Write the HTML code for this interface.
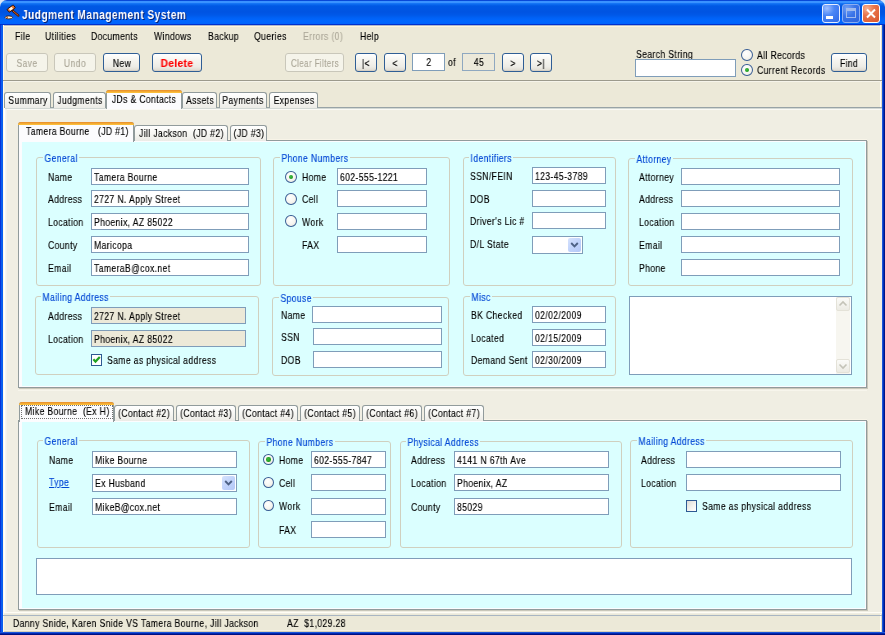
<!DOCTYPE html><html><head><meta charset="utf-8"><style>
html,body{margin:0;padding:0;width:885px;height:635px;overflow:hidden;background:#ECE9D8;}
html,body{background:#DDE6F5 !important;}
body{position:relative;font-family:"Liberation Sans",sans-serif;}
div{position:absolute;}
.t{position:absolute;white-space:pre;line-height:1;transform-origin:0 0;will-change:transform;-webkit-text-stroke:0.15px currentColor;letter-spacing:0.45px;}
</style></head><body>
<div style="left:0px;top:20px;width:885px;height:615px;background:#ECE9D8"></div>
<div style="left:0px;top:0px;width:885px;height:25px;border-radius:7px 7px 0 0;background:linear-gradient(#0848D8 0px,#0848D8 1px,#3A92FF 1px,#3A92FF 3px,#1A7AF8 3px,#0A68EE 4.5px,#0058E4 6px,#0054E2 12px,#0058E8 15px,#0062F6 18px,#0066FF 21px,#0064FC 24px,#0030D0 24px,#0030C8 25px)"></div>
<div style="left:0px;top:25px;width:1px;height:610px;background:#0832D8"></div>
<div style="left:1px;top:25px;width:2px;height:610px;background:#0A5EEE"></div>
<div style="left:882px;top:25px;width:1px;height:610px;background:#1A55D8"></div>
<div style="left:883px;top:25px;width:1px;height:610px;background:#0030B8"></div>
<div style="left:884px;top:25px;width:1px;height:610px;background:#001488"></div>
<div style="left:3px;top:630px;width:879px;height:1px;background:#F5F2E2"></div>
<div style="left:3px;top:631px;width:879px;height:1px;background:#D6D0BA"></div>
<div style="left:0px;top:632px;width:885px;height:1px;background:#1A55DA"></div>
<div style="left:0px;top:633px;width:885px;height:1px;background:#0028B0"></div>
<div style="left:0px;top:634px;width:885px;height:1px;background:#001080"></div>
<div style="left:3px;top:25px;width:879px;height:1px;background:#AEB8CC"></div>
<div style="left:3px;top:26px;width:879px;height:1px;background:#FFF5DC"></div>
<div style="left:3px;top:25px;width:1px;height:607px;background:#FFF9E8"></div>
<div style="left:880px;top:25px;width:1px;height:607px;background:#FFFFFF"></div>
<div style="left:881px;top:25px;width:1px;height:607px;background:#E6DEC6"></div>
<svg style="position:absolute;left:2px;top:2px" width="20" height="20" viewBox="0 0 20 20"><line x1="10.8" y1="8.8" x2="16.4" y2="13.6" stroke="#3A1606" stroke-width="2.2" stroke-linecap="round"/><line x1="10.8" y1="8.8" x2="16.4" y2="13.6" stroke="#E0602A" stroke-width="1.0"/><g transform="rotate(-35 9.2 6.6)"><rect x="5.3" y="4.7" width="7.8" height="3.8" rx="1" fill="#E8702E" stroke="#2A1004" stroke-width="0.9"/><rect x="7.2" y="5.3" width="3.4" height="2.6" fill="#FFF4E0"/></g><ellipse cx="6.8" cy="15.4" rx="3.7" ry="1.5" fill="#FFEFD2" stroke="#2A1004" stroke-width="0.8"/><rect x="4.5" y="14.8" width="1.5" height="1.2" fill="#E0602A"/></svg>
<span class="t" style="left:23.00px;top:9.20px;font-size:13px;color:#0A1E6A;font-weight:bold;transform:scaleX(0.78);-webkit-text-stroke:0;letter-spacing:0.6px;">Judgment Management System</span>
<span class="t" style="left:22.00px;top:8.20px;font-size:13px;color:#FFFFFF;font-weight:bold;transform:scaleX(0.78);-webkit-text-stroke:0;letter-spacing:0.6px;">Judgment Management System</span>
<div style="left:822px;top:4px;width:18px;height:19px;border:1px solid #E6EEFF;border-radius:3px;box-sizing:border-box;background:radial-gradient(circle at 25% 20%,#9FC0FF 0%,#4A86F6 40%,#2F68E6 100%)"></div>
<div style="left:842px;top:4px;width:18px;height:19px;border:1px solid #8CAEF0;border-radius:3px;box-sizing:border-box;background:radial-gradient(circle at 25% 20%,#6F9FF5 0%,#3A74E8 45%,#2C62DC 100%)"></div>
<div style="left:862px;top:4px;width:18px;height:19px;border:1px solid #FFFFFF;border-radius:3px;box-sizing:border-box;background:radial-gradient(circle at 25% 20%,#F6B090 0%,#E8744A 40%,#D9542B 100%)"></div>
<div style="left:826px;top:16px;width:7px;height:3px;background:#fff"></div>
<div style="left:846px;top:8px;width:10px;height:10px;border:1px solid #9FBAEE;border-top-width:3px;box-sizing:border-box"></div>
<svg style="position:absolute;left:862px;top:4px" width="18" height="19" viewBox="0 0 18 19"><path d="M5 5.5 L13 13.5 M13 5.5 L5 13.5" stroke="#fff" stroke-width="2"/></svg>
<span class="t" style="left:14.70px;top:30.91px;font-size:10.5px;color:#000;font-weight:normal;transform:scaleX(0.82);">File</span>
<span class="t" style="left:45.20px;top:30.91px;font-size:10.5px;color:#000;font-weight:normal;transform:scaleX(0.82);">Utilities</span>
<span class="t" style="left:91.40px;top:30.91px;font-size:10.5px;color:#000;font-weight:normal;transform:scaleX(0.82);">Documents</span>
<span class="t" style="left:154.40px;top:30.91px;font-size:10.5px;color:#000;font-weight:normal;transform:scaleX(0.82);">Windows</span>
<span class="t" style="left:208.10px;top:30.91px;font-size:10.5px;color:#000;font-weight:normal;transform:scaleX(0.82);">Backup</span>
<span class="t" style="left:254.40px;top:30.91px;font-size:10.5px;color:#000;font-weight:normal;transform:scaleX(0.82);">Queries</span>
<span class="t" style="left:303.30px;top:30.91px;font-size:10.5px;color:#ACA899;font-weight:normal;transform:scaleX(0.82);">Errors (0)</span>
<span class="t" style="left:359.70px;top:30.91px;font-size:10.5px;color:#000;font-weight:normal;transform:scaleX(0.82);">Help</span>
<div style="left:6px;top:53px;width:42px;height:19px;border:1px solid #C9C7BA;border-radius:3px;background:#F5F4EA;box-sizing:border-box"></div>
<span class="t" style="left:-173.0px;width:400px;text-align:center;top:57.71px;font-size:10.5px;color:#ACA899;font-weight:normal;transform:scaleX(0.82);transform-origin:50% 0;">Save</span>
<div style="left:54px;top:53px;width:42px;height:19px;border:1px solid #C9C7BA;border-radius:3px;background:#F5F4EA;box-sizing:border-box"></div>
<span class="t" style="left:-125.0px;width:400px;text-align:center;top:57.71px;font-size:10.5px;color:#ACA899;font-weight:normal;transform:scaleX(0.82);transform-origin:50% 0;">Undo</span>
<div style="left:103px;top:53px;width:37px;height:19px;border:1px solid #2F5E95;border-radius:3px;box-sizing:border-box;background:linear-gradient(#FFFFFF 0%,#F6F5F0 35%,#EDECE6 75%,#DDD9CE 100%);box-shadow:inset 0 -1px 0 #D6D0C5"></div>
<span class="t" style="left:-78.5px;width:400px;text-align:center;top:57.71px;font-size:10.5px;color:#000;font-weight:normal;transform:scaleX(0.82);transform-origin:50% 0;">New</span>
<div style="left:152px;top:53px;width:50px;height:19px;border:1px solid #2F5E95;border-radius:3px;box-sizing:border-box;background:linear-gradient(#FFFFFF 0%,#F6F5F0 35%,#EDECE6 75%,#DDD9CE 100%);box-shadow:inset 0 -1px 0 #D6D0C5"></div>
<span class="t" style="left:-23.0px;width:400px;text-align:center;top:57.71px;font-size:10.5px;color:#FF0000;font-weight:bold;transform:scaleX(0.96);transform-origin:50% 0;">Delete</span>
<div style="left:285px;top:53px;width:59px;height:19px;border:1px solid #C9C7BA;border-radius:3px;background:#F5F4EA;box-sizing:border-box"></div>
<span class="t" style="left:114.5px;width:400px;text-align:center;top:57.71px;font-size:10.5px;color:#ACA899;font-weight:normal;transform:scaleX(0.77);transform-origin:50% 0;">Clear Filters</span>
<div style="left:355px;top:53px;width:22px;height:19px;border:1px solid #2F5E95;border-radius:3px;box-sizing:border-box;background:linear-gradient(#FFFFFF 0%,#F6F5F0 35%,#EDECE6 75%,#DDD9CE 100%);box-shadow:inset 0 -1px 0 #D6D0C5"></div>
<span class="t" style="left:166.0px;width:400px;text-align:center;top:57.71px;font-size:10.5px;color:#000;font-weight:normal;transform:scaleX(0.82);transform-origin:50% 0;">|&lt;</span>
<div style="left:384px;top:53px;width:22px;height:19px;border:1px solid #2F5E95;border-radius:3px;box-sizing:border-box;background:linear-gradient(#FFFFFF 0%,#F6F5F0 35%,#EDECE6 75%,#DDD9CE 100%);box-shadow:inset 0 -1px 0 #D6D0C5"></div>
<span class="t" style="left:195.0px;width:400px;text-align:center;top:57.71px;font-size:10.5px;color:#000;font-weight:normal;transform:scaleX(0.82);transform-origin:50% 0;">&lt;</span>
<div style="left:412px;top:53px;width:33px;height:18px;border:1px solid #7F9DB9;background:#fff;box-sizing:border-box"></div>
<span class="t" style="left:228.5px;width:400px;text-align:center;top:56.71px;font-size:10.5px;color:#000;font-weight:normal;transform:scaleX(0.82);transform-origin:50% 0;">2</span>
<span class="t" style="left:447.90px;top:56.71px;font-size:10.5px;color:#000;font-weight:normal;transform:scaleX(0.82);">of</span>
<div style="left:462px;top:53px;width:33px;height:18px;border:1px solid #8FA8C0;background:#ECE9DA;box-sizing:border-box"></div>
<span class="t" style="left:278.5px;width:400px;text-align:center;top:56.71px;font-size:10.5px;color:#000;font-weight:normal;transform:scaleX(0.82);transform-origin:50% 0;">45</span>
<div style="left:502px;top:53px;width:22px;height:19px;border:1px solid #2F5E95;border-radius:3px;box-sizing:border-box;background:linear-gradient(#FFFFFF 0%,#F6F5F0 35%,#EDECE6 75%,#DDD9CE 100%);box-shadow:inset 0 -1px 0 #D6D0C5"></div>
<span class="t" style="left:313.0px;width:400px;text-align:center;top:57.71px;font-size:10.5px;color:#000;font-weight:normal;transform:scaleX(0.82);transform-origin:50% 0;">&gt;</span>
<div style="left:530px;top:53px;width:22px;height:19px;border:1px solid #2F5E95;border-radius:3px;box-sizing:border-box;background:linear-gradient(#FFFFFF 0%,#F6F5F0 35%,#EDECE6 75%,#DDD9CE 100%);box-shadow:inset 0 -1px 0 #D6D0C5"></div>
<span class="t" style="left:341.0px;width:400px;text-align:center;top:57.71px;font-size:10.5px;color:#000;font-weight:normal;transform:scaleX(0.82);transform-origin:50% 0;">&gt;|</span>
<span class="t" style="left:635.60px;top:48.51px;font-size:10.5px;color:#000;font-weight:normal;transform:scaleX(0.82);">Search String</span>
<div style="left:635px;top:59px;width:101px;height:18px;border:1px solid #7F9DB9;background:#fff;box-sizing:border-box"></div>
<div style="left:741.3px;top:49.300000000000004px;width:11.5px;height:11.8px;border-radius:50%;border:1px solid #3A5F96;box-sizing:border-box;background:radial-gradient(circle at 40% 35%,#FFFFFF 0%,#F6F5F0 55%,#DEDCD3 100%)"></div>
<div style="left:741.3px;top:64.3px;width:11.5px;height:11.8px;border-radius:50%;border:1px solid #3A5F96;box-sizing:border-box;background:radial-gradient(circle at 40% 35%,#FFFFFF 0%,#F6F5F0 55%,#DEDCD3 100%)"></div>
<div style="left:744.9px;top:68.0px;width:4.4px;height:4.4px;border-radius:50%;background:radial-gradient(circle at 40% 40%,#40B840 0%,#21A121 60%,#168A16 100%)"></div>
<span class="t" style="left:756.60px;top:49.91px;font-size:10.5px;color:#000;font-weight:normal;transform:scaleX(0.82);">All Records</span>
<span class="t" style="left:756.60px;top:64.91px;font-size:10.5px;color:#000;font-weight:normal;transform:scaleX(0.82);">Current Records</span>
<div style="left:831px;top:53px;width:36px;height:19px;border:1px solid #2F5E95;border-radius:3px;box-sizing:border-box;background:linear-gradient(#FFFFFF 0%,#F6F5F0 35%,#EDECE6 75%,#DDD9CE 100%);box-shadow:inset 0 -1px 0 #D6D0C5"></div>
<span class="t" style="left:649.0px;width:400px;text-align:center;top:57.71px;font-size:10.5px;color:#000;font-weight:normal;transform:scaleX(0.82);transform-origin:50% 0;">Find</span>
<div style="left:3px;top:80px;width:879px;height:1px;background:#9C9A8C"></div>
<div style="left:3px;top:81px;width:879px;height:1px;background:#F6F4EA"></div>
<div style="left:4px;top:108px;width:878px;height:506px;background:#F0EEE3"></div>
<div style="left:4px;top:107px;width:878px;height:1px;background:#98A3A6"></div>
<div style="left:4px;top:108px;width:878px;height:1px;background:#D2D8D4"></div>
<div style="left:4px;top:109px;width:878px;height:1px;background:#FBFAF5"></div>
<div style="left:4px;top:108px;width:1px;height:505px;background:#FFFFFF"></div>
<div style="left:5px;top:109px;width:2px;height:504px;background:linear-gradient(90deg,#F8F8F4,#F2F0E8)"></div>
<div style="left:4px;top:612px;width:878px;height:1px;background:#FFFDF5"></div>
<div style="left:4px;top:92px;width:47px;height:16px;border:1px solid #919B9C;border-bottom:none;border-radius:3px 3px 0 0;box-sizing:border-box;background:linear-gradient(#FFFFFF 0%,#F7F7F3 50%,#ECEBE6 100%)"></div>
<span class="t" style="left:-172.5px;width:400px;text-align:center;top:94.91px;font-size:10.5px;color:#000;font-weight:normal;transform:scaleX(0.82);transform-origin:50% 0;">Summary</span>
<div style="left:53px;top:92px;width:53px;height:16px;border:1px solid #919B9C;border-bottom:none;border-radius:3px 3px 0 0;box-sizing:border-box;background:linear-gradient(#FFFFFF 0%,#F7F7F3 50%,#ECEBE6 100%)"></div>
<span class="t" style="left:-120.5px;width:400px;text-align:center;top:94.91px;font-size:10.5px;color:#000;font-weight:normal;transform:scaleX(0.82);transform-origin:50% 0;">Judgments</span>
<div style="left:219px;top:92px;width:48px;height:16px;border:1px solid #919B9C;border-bottom:none;border-radius:3px 3px 0 0;box-sizing:border-box;background:linear-gradient(#FFFFFF 0%,#F7F7F3 50%,#ECEBE6 100%)"></div>
<span class="t" style="left:43.0px;width:400px;text-align:center;top:94.91px;font-size:10.5px;color:#000;font-weight:normal;transform:scaleX(0.82);transform-origin:50% 0;">Payments</span>
<div style="left:269px;top:92px;width:49px;height:16px;border:1px solid #919B9C;border-bottom:none;border-radius:3px 3px 0 0;box-sizing:border-box;background:linear-gradient(#FFFFFF 0%,#F7F7F3 50%,#ECEBE6 100%)"></div>
<span class="t" style="left:93.5px;width:400px;text-align:center;top:94.91px;font-size:10.5px;color:#000;font-weight:normal;transform:scaleX(0.82);transform-origin:50% 0;">Expenses</span>
<div style="left:182px;top:92px;width:35px;height:16px;border:1px solid #919B9C;border-bottom:none;border-radius:3px 3px 0 0;box-sizing:border-box;background:linear-gradient(#FFFFFF 0%,#F7F7F3 50%,#ECEBE6 100%)"></div>
<span class="t" style="left:-0.5px;width:400px;text-align:center;top:94.91px;font-size:10.5px;color:#000;font-weight:normal;transform:scaleX(0.82);transform-origin:50% 0;">Assets</span>
<div style="left:106px;top:90px;width:76px;height:19px;border:1px solid #919B9C;border-bottom:none;border-radius:3px 3px 0 0;background:#FCFCFE;box-sizing:border-box"></div>
<div style="left:106px;top:90px;width:76px;height:3px;background:linear-gradient(#E68B2C,#FFC73C);border-radius:3px 3px 0 0"></div>
<span class="t" style="left:-56.0px;width:400px;text-align:center;top:93.61px;font-size:10.5px;color:#000;font-weight:normal;transform:scaleX(0.82);transform-origin:50% 0;">JDs &amp; Contacts</span>
<div style="left:18px;top:140px;width:849px;height:248px;border:1px solid #919B9C;background:#FCFCFE;box-sizing:border-box;box-shadow:1px 1px 0 #C9C7BA"></div>
<div style="left:22px;top:142px;width:843px;height:244px;background:#DBFFFF"></div>
<div style="left:18px;top:139px;width:849px;height:1px;background:#F8F4E8"></div>
<div style="left:134px;top:125px;width:94px;height:16px;border:1px solid #919B9C;border-bottom:none;border-radius:3px 3px 0 0;box-sizing:border-box;background:linear-gradient(#FFFFFF 0%,#F7F7F3 50%,#ECEBE6 100%)"></div>
<span class="t" style="left:139.40px;top:127.91px;font-size:10.5px;color:#000;font-weight:normal;transform:scaleX(0.82);">Jill Jackson  (JD #2)</span>
<div style="left:230px;top:125px;width:37px;height:16px;border:1px solid #919B9C;border-bottom:none;border-radius:3px 3px 0 0;box-sizing:border-box;background:linear-gradient(#FFFFFF 0%,#F7F7F3 50%,#ECEBE6 100%)"></div>
<span class="t" style="left:48.5px;width:400px;text-align:center;top:127.91px;font-size:10.5px;color:#000;font-weight:normal;transform:scaleX(0.82);transform-origin:50% 0;">(JD #3)</span>
<div style="left:18px;top:122px;width:116px;height:20px;border:1px solid #919B9C;border-bottom:none;border-radius:3px 3px 0 0;background:#FCFCFE;box-sizing:border-box"></div>
<div style="left:18px;top:122px;width:116px;height:3px;background:linear-gradient(#E68B2C,#FFC73C);border-radius:3px 3px 0 0"></div>
<span class="t" style="left:25.90px;top:125.61px;font-size:10.5px;color:#000;font-weight:normal;transform:scaleX(0.82);">Tamera Bourne   (JD #1)</span>
<div style="left:36px;top:157px;width:225px;height:129px;border:1px solid #D0D0BF;border-radius:3px;box-sizing:border-box"></div>
<span class="t" style="left:42.58px;top:153.11px;font-size:10.5px;color:#0046D5;font-weight:normal;transform:scaleX(0.82);background:#DBFFFF;padding:0 1.5px 0 1.8px;">General</span>
<span class="t" style="left:47.90px;top:172.31px;font-size:10.5px;color:#000;font-weight:normal;transform:scaleX(0.82);">Name</span>
<div style="left:91px;top:168px;width:158px;height:17px;border:1px solid #7F9DB9;background:#fff;box-sizing:border-box"></div>
<span class="t" style="left:94.40px;top:172.31px;font-size:10.5px;color:#000;font-weight:normal;transform:scaleX(0.82);">Tamera Bourne</span>
<span class="t" style="left:47.90px;top:194.31px;font-size:10.5px;color:#000;font-weight:normal;transform:scaleX(0.82);">Address</span>
<div style="left:91px;top:190px;width:158px;height:17px;border:1px solid #7F9DB9;background:#fff;box-sizing:border-box"></div>
<span class="t" style="left:94.40px;top:194.31px;font-size:10.5px;color:#000;font-weight:normal;transform:scaleX(0.82);">2727 N. Apply Street</span>
<span class="t" style="left:47.90px;top:217.31px;font-size:10.5px;color:#000;font-weight:normal;transform:scaleX(0.82);">Location</span>
<div style="left:91px;top:213px;width:158px;height:17px;border:1px solid #7F9DB9;background:#fff;box-sizing:border-box"></div>
<span class="t" style="left:94.40px;top:217.31px;font-size:10.5px;color:#000;font-weight:normal;transform:scaleX(0.82);">Phoenix, AZ 85022</span>
<span class="t" style="left:47.90px;top:240.31px;font-size:10.5px;color:#000;font-weight:normal;transform:scaleX(0.82);">County</span>
<div style="left:91px;top:236px;width:158px;height:17px;border:1px solid #7F9DB9;background:#fff;box-sizing:border-box"></div>
<span class="t" style="left:94.40px;top:240.31px;font-size:10.5px;color:#000;font-weight:normal;transform:scaleX(0.82);">Maricopa</span>
<span class="t" style="left:47.90px;top:263.31px;font-size:10.5px;color:#000;font-weight:normal;transform:scaleX(0.82);">Email</span>
<div style="left:91px;top:259px;width:158px;height:17px;border:1px solid #7F9DB9;background:#fff;box-sizing:border-box"></div>
<span class="t" style="left:94.40px;top:263.31px;font-size:10.5px;color:#000;font-weight:normal;transform:scaleX(0.82);">TameraB@cox.net</span>
<div style="left:273px;top:157px;width:177px;height:129px;border:1px solid #D0D0BF;border-radius:3px;box-sizing:border-box"></div>
<span class="t" style="left:280.08px;top:153.11px;font-size:10.5px;color:#0046D5;font-weight:normal;transform:scaleX(0.82);background:#DBFFFF;padding:0 1.5px 0 1.8px;">Phone Numbers</span>
<div style="left:285.3px;top:171.1px;width:11.5px;height:11.8px;border-radius:50%;border:1px solid #3A5F96;box-sizing:border-box;background:radial-gradient(circle at 40% 35%,#FFFFFF 0%,#F6F5F0 55%,#DEDCD3 100%)"></div>
<div style="left:288.9px;top:174.8px;width:4.4px;height:4.4px;border-radius:50%;background:radial-gradient(circle at 40% 40%,#40B840 0%,#21A121 60%,#168A16 100%)"></div>
<span class="t" style="left:301.90px;top:172.31px;font-size:10.5px;color:#000;font-weight:normal;transform:scaleX(0.82);">Home</span>
<div style="left:337px;top:168px;width:90px;height:17px;border:1px solid #7F9DB9;background:#fff;box-sizing:border-box"></div>
<span class="t" style="left:340.40px;top:172.31px;font-size:10.5px;color:#000;font-weight:normal;transform:scaleX(0.82);">602-555-1221</span>
<div style="left:285.3px;top:192.79999999999998px;width:11.5px;height:11.8px;border-radius:50%;border:1px solid #3A5F96;box-sizing:border-box;background:radial-gradient(circle at 40% 35%,#FFFFFF 0%,#F6F5F0 55%,#DEDCD3 100%)"></div>
<span class="t" style="left:301.90px;top:194.31px;font-size:10.5px;color:#000;font-weight:normal;transform:scaleX(0.82);">Cell</span>
<div style="left:337px;top:190px;width:90px;height:17px;border:1px solid #7F9DB9;background:#fff;box-sizing:border-box"></div>
<div style="left:285.3px;top:215.1px;width:11.5px;height:11.8px;border-radius:50%;border:1px solid #3A5F96;box-sizing:border-box;background:radial-gradient(circle at 40% 35%,#FFFFFF 0%,#F6F5F0 55%,#DEDCD3 100%)"></div>
<span class="t" style="left:301.90px;top:217.31px;font-size:10.5px;color:#000;font-weight:normal;transform:scaleX(0.82);">Work</span>
<div style="left:337px;top:213px;width:90px;height:17px;border:1px solid #7F9DB9;background:#fff;box-sizing:border-box"></div>
<span class="t" style="left:301.90px;top:240.31px;font-size:10.5px;color:#000;font-weight:normal;transform:scaleX(0.82);">FAX</span>
<div style="left:337px;top:236px;width:90px;height:17px;border:1px solid #7F9DB9;background:#fff;box-sizing:border-box"></div>
<div style="left:463px;top:157px;width:153px;height:129px;border:1px solid #D0D0BF;border-radius:3px;box-sizing:border-box"></div>
<span class="t" style="left:468.98px;top:153.11px;font-size:10.5px;color:#0046D5;font-weight:normal;transform:scaleX(0.82);background:#DBFFFF;padding:0 1.5px 0 1.8px;">Identifiers</span>
<span class="t" style="left:469.80px;top:171.31px;font-size:10.5px;color:#000;font-weight:normal;transform:scaleX(0.82);">SSN/FEIN</span>
<div style="left:532px;top:167px;width:74px;height:17px;border:1px solid #7F9DB9;background:#fff;box-sizing:border-box"></div>
<span class="t" style="left:535.40px;top:171.31px;font-size:10.5px;color:#000;font-weight:normal;transform:scaleX(0.82);">123-45-3789</span>
<span class="t" style="left:469.80px;top:194.31px;font-size:10.5px;color:#000;font-weight:normal;transform:scaleX(0.82);">DOB</span>
<div style="left:532px;top:190px;width:74px;height:17px;border:1px solid #7F9DB9;background:#fff;box-sizing:border-box"></div>
<span class="t" style="left:469.80px;top:216.31px;font-size:10.5px;color:#000;font-weight:normal;transform:scaleX(0.82);">Driver&#x27;s Lic #</span>
<div style="left:532px;top:212px;width:74px;height:17px;border:1px solid #7F9DB9;background:#fff;box-sizing:border-box"></div>
<span class="t" style="left:469.80px;top:239.31px;font-size:10.5px;color:#000;font-weight:normal;transform:scaleX(0.82);">D/L State</span>
<div style="left:532px;top:236px;width:51px;height:18px;border:1px solid #7F9DB9;background:#fff;box-sizing:border-box"></div>
<div style="left:568px;top:238px;width:13px;height:14px;border-radius:2px;background:linear-gradient(135deg,#D6E3FD 0%,#C1D3FB 50%,#B4C8F7 100%)"></div>
<svg style="position:absolute;left:568px;top:238px" width="13" height="14" viewBox="0 0 13 14"><path d="M3.2 5.0 L6.5 8.3 L9.8 5.0" fill="none" stroke="#4D6185" stroke-width="1.9"/></svg>
<div style="left:628px;top:158px;width:225px;height:128px;border:1px solid #D0D0BF;border-radius:3px;box-sizing:border-box"></div>
<span class="t" style="left:634.58px;top:154.11px;font-size:10.5px;color:#0046D5;font-weight:normal;transform:scaleX(0.82);background:#DBFFFF;padding:0 1.5px 0 1.8px;">Attorney</span>
<span class="t" style="left:639.20px;top:171.61px;font-size:10.5px;color:#000;font-weight:normal;transform:scaleX(0.82);">Attorney</span>
<div style="left:681px;top:168px;width:159px;height:17px;border:1px solid #7F9DB9;background:#fff;box-sizing:border-box"></div>
<span class="t" style="left:639.20px;top:193.61px;font-size:10.5px;color:#000;font-weight:normal;transform:scaleX(0.82);">Address</span>
<div style="left:681px;top:190px;width:159px;height:17px;border:1px solid #7F9DB9;background:#fff;box-sizing:border-box"></div>
<span class="t" style="left:639.20px;top:216.61px;font-size:10.5px;color:#000;font-weight:normal;transform:scaleX(0.82);">Location</span>
<div style="left:681px;top:213px;width:159px;height:17px;border:1px solid #7F9DB9;background:#fff;box-sizing:border-box"></div>
<span class="t" style="left:639.20px;top:239.61px;font-size:10.5px;color:#000;font-weight:normal;transform:scaleX(0.82);">Email</span>
<div style="left:681px;top:236px;width:159px;height:17px;border:1px solid #7F9DB9;background:#fff;box-sizing:border-box"></div>
<span class="t" style="left:639.20px;top:262.61px;font-size:10.5px;color:#000;font-weight:normal;transform:scaleX(0.82);">Phone</span>
<div style="left:681px;top:259px;width:159px;height:17px;border:1px solid #7F9DB9;background:#fff;box-sizing:border-box"></div>
<div style="left:35px;top:296px;width:224px;height:79px;border:1px solid #D0D0BF;border-radius:3px;box-sizing:border-box"></div>
<span class="t" style="left:41.18px;top:292.11px;font-size:10.5px;color:#0046D5;font-weight:normal;transform:scaleX(0.82);background:#DBFFFF;padding:0 1.5px 0 1.8px;">Mailing Address</span>
<span class="t" style="left:47.90px;top:311.31px;font-size:10.5px;color:#000;font-weight:normal;transform:scaleX(0.82);">Address</span>
<div style="left:91px;top:307px;width:155px;height:17px;border:1px solid #7F9DB9;background:#ECE9D8;box-sizing:border-box"></div>
<span class="t" style="left:94.40px;top:311.31px;font-size:10.5px;color:#000;font-weight:normal;transform:scaleX(0.82);">2727 N. Apply Street</span>
<span class="t" style="left:47.90px;top:334.31px;font-size:10.5px;color:#000;font-weight:normal;transform:scaleX(0.82);">Location</span>
<div style="left:91px;top:330px;width:155px;height:17px;border:1px solid #7F9DB9;background:#ECE9D8;box-sizing:border-box"></div>
<span class="t" style="left:94.40px;top:334.31px;font-size:10.5px;color:#000;font-weight:normal;transform:scaleX(0.82);">Phoenix, AZ 85022</span>
<div style="left:91px;top:354px;width:11px;height:12px;border:1px solid #2D5A93;box-sizing:border-box;background:linear-gradient(135deg,#DCDCD7 0%,#F4F4F0 60%,#FFFFFF 100%)"></div>
<div style="left:92px;top:355px;width:9px;height:10px;background:#fff"></div>
<svg style="position:absolute;left:91px;top:354px" width="12" height="12" viewBox="0 0 12 12"><path d="M2.4 5.2 L4.5 7.6 L8.8 3.0" fill="none" stroke="#21A121" stroke-width="2.2"/></svg>
<span class="t" style="left:107.00px;top:354.71px;font-size:10.5px;color:#000;font-weight:normal;transform:scaleX(0.82);">Same as physical address</span>
<div style="left:272px;top:297px;width:177px;height:79px;border:1px solid #D0D0BF;border-radius:3px;box-sizing:border-box"></div>
<span class="t" style="left:278.88px;top:293.11px;font-size:10.5px;color:#0046D5;font-weight:normal;transform:scaleX(0.82);background:#DBFFFF;padding:0 1.5px 0 1.8px;">Spouse</span>
<span class="t" style="left:280.90px;top:310.11px;font-size:10.5px;color:#000;font-weight:normal;transform:scaleX(0.82);">Name</span>
<div style="left:312px;top:306px;width:130px;height:17px;border:1px solid #7F9DB9;background:#fff;box-sizing:border-box"></div>
<span class="t" style="left:280.90px;top:332.11px;font-size:10.5px;color:#000;font-weight:normal;transform:scaleX(0.82);">SSN</span>
<div style="left:313px;top:328px;width:129px;height:17px;border:1px solid #7F9DB9;background:#fff;box-sizing:border-box"></div>
<span class="t" style="left:280.90px;top:355.11px;font-size:10.5px;color:#000;font-weight:normal;transform:scaleX(0.82);">DOB</span>
<div style="left:313px;top:351px;width:129px;height:17px;border:1px solid #7F9DB9;background:#fff;box-sizing:border-box"></div>
<div style="left:463px;top:296px;width:153px;height:80px;border:1px solid #D0D0BF;border-radius:3px;box-sizing:border-box"></div>
<span class="t" style="left:470.08px;top:292.11px;font-size:10.5px;color:#0046D5;font-weight:normal;transform:scaleX(0.82);background:#DBFFFF;padding:0 1.5px 0 1.8px;">Misc</span>
<span class="t" style="left:470.90px;top:310.41px;font-size:10.5px;color:#000;font-weight:normal;transform:scaleX(0.82);">BK Checked</span>
<div style="left:532px;top:306px;width:74px;height:17px;border:1px solid #7F9DB9;background:#fff;box-sizing:border-box"></div>
<span class="t" style="left:535.40px;top:310.31px;font-size:10.5px;color:#000;font-weight:normal;transform:scaleX(0.82);">02/02/2009</span>
<span class="t" style="left:470.90px;top:333.41px;font-size:10.5px;color:#000;font-weight:normal;transform:scaleX(0.82);">Located</span>
<div style="left:532px;top:329px;width:74px;height:17px;border:1px solid #7F9DB9;background:#fff;box-sizing:border-box"></div>
<span class="t" style="left:535.40px;top:333.31px;font-size:10.5px;color:#000;font-weight:normal;transform:scaleX(0.82);">02/15/2009</span>
<span class="t" style="left:470.90px;top:355.41px;font-size:10.5px;color:#000;font-weight:normal;transform:scaleX(0.82);">Demand Sent</span>
<div style="left:532px;top:351px;width:74px;height:17px;border:1px solid #7F9DB9;background:#fff;box-sizing:border-box"></div>
<span class="t" style="left:535.40px;top:355.31px;font-size:10.5px;color:#000;font-weight:normal;transform:scaleX(0.82);">02/30/2009</span>
<div style="left:629px;top:296px;width:223px;height:79px;border:1px solid #7F9DB9;background:#fff;box-sizing:border-box"></div>
<div style="left:836px;top:297px;width:14px;height:77px;background:#F7F6F0"></div>
<div style="left:836px;top:297px;width:14px;height:14px;border:1px solid #E4E2D8;border-radius:2px;box-sizing:border-box;background:linear-gradient(#FBFBF8,#ECEBE4)"></div>
<div style="left:836px;top:359px;width:14px;height:14px;border:1px solid #E4E2D8;border-radius:2px;box-sizing:border-box;background:linear-gradient(#FBFBF8,#ECEBE4)"></div>
<svg style="position:absolute;left:836px;top:297px" width="14" height="77" viewBox="0 0 14 77"><path d="M3.5 8.5 L7 5 L10.5 8.5" fill="none" stroke="#C4C3B8" stroke-width="1.6"/><path d="M3.5 67.5 L7 71 L10.5 67.5" fill="none" stroke="#C4C3B8" stroke-width="1.6"/></svg>
<div style="left:18px;top:390px;width:849px;height:1px;background:#F7F5EC"></div>
<div style="left:18px;top:420px;width:849px;height:190px;border:1px solid #919B9C;background:#FCFCFE;box-sizing:border-box;box-shadow:1px 1px 0 #C9C7BA"></div>
<div style="left:22px;top:422px;width:843px;height:186px;background:#DBFFFF"></div>
<div style="left:18px;top:419px;width:849px;height:1px;background:#F8F4E8"></div>
<div style="left:114px;top:405px;width:60px;height:16px;border:1px solid #919B9C;border-bottom:none;border-radius:3px 3px 0 0;box-sizing:border-box;background:linear-gradient(#FFFFFF 0%,#F7F7F3 50%,#ECEBE6 100%)"></div>
<span class="t" style="left:-56.0px;width:400px;text-align:center;top:407.91px;font-size:10.5px;color:#000;font-weight:normal;transform:scaleX(0.82);transform-origin:50% 0;">(Contact #2)</span>
<div style="left:176px;top:405px;width:60px;height:16px;border:1px solid #919B9C;border-bottom:none;border-radius:3px 3px 0 0;box-sizing:border-box;background:linear-gradient(#FFFFFF 0%,#F7F7F3 50%,#ECEBE6 100%)"></div>
<span class="t" style="left:6.0px;width:400px;text-align:center;top:407.91px;font-size:10.5px;color:#000;font-weight:normal;transform:scaleX(0.82);transform-origin:50% 0;">(Contact #3)</span>
<div style="left:238px;top:405px;width:60px;height:16px;border:1px solid #919B9C;border-bottom:none;border-radius:3px 3px 0 0;box-sizing:border-box;background:linear-gradient(#FFFFFF 0%,#F7F7F3 50%,#ECEBE6 100%)"></div>
<span class="t" style="left:68.0px;width:400px;text-align:center;top:407.91px;font-size:10.5px;color:#000;font-weight:normal;transform:scaleX(0.82);transform-origin:50% 0;">(Contact #4)</span>
<div style="left:300px;top:405px;width:60px;height:16px;border:1px solid #919B9C;border-bottom:none;border-radius:3px 3px 0 0;box-sizing:border-box;background:linear-gradient(#FFFFFF 0%,#F7F7F3 50%,#ECEBE6 100%)"></div>
<span class="t" style="left:130.0px;width:400px;text-align:center;top:407.91px;font-size:10.5px;color:#000;font-weight:normal;transform:scaleX(0.82);transform-origin:50% 0;">(Contact #5)</span>
<div style="left:362px;top:405px;width:60px;height:16px;border:1px solid #919B9C;border-bottom:none;border-radius:3px 3px 0 0;box-sizing:border-box;background:linear-gradient(#FFFFFF 0%,#F7F7F3 50%,#ECEBE6 100%)"></div>
<span class="t" style="left:192.0px;width:400px;text-align:center;top:407.91px;font-size:10.5px;color:#000;font-weight:normal;transform:scaleX(0.82);transform-origin:50% 0;">(Contact #6)</span>
<div style="left:424px;top:405px;width:60px;height:16px;border:1px solid #919B9C;border-bottom:none;border-radius:3px 3px 0 0;box-sizing:border-box;background:linear-gradient(#FFFFFF 0%,#F7F7F3 50%,#ECEBE6 100%)"></div>
<span class="t" style="left:254.0px;width:400px;text-align:center;top:407.91px;font-size:10.5px;color:#000;font-weight:normal;transform:scaleX(0.82);transform-origin:50% 0;">(Contact #7)</span>
<div style="left:19px;top:402px;width:95px;height:20px;border:1px solid #919B9C;border-bottom:none;border-radius:3px 3px 0 0;background:#FCFCFE;box-sizing:border-box"></div>
<div style="left:19px;top:402px;width:95px;height:3px;background:linear-gradient(#E68B2C,#FFC73C);border-radius:3px 3px 0 0"></div>
<div style="left:21px;top:405px;width:92px;height:14px;border:1px dotted #707070;box-sizing:border-box"></div>
<span class="t" style="left:25.40px;top:406.41px;font-size:10.5px;color:#000;font-weight:normal;transform:scaleX(0.82);">Mike Bourne  (Ex H)</span>
<div style="left:37px;top:440px;width:213px;height:108px;border:1px solid #D0D0BF;border-radius:3px;box-sizing:border-box"></div>
<span class="t" style="left:42.98px;top:436.11px;font-size:10.5px;color:#0046D5;font-weight:normal;transform:scaleX(0.82);background:#DBFFFF;padding:0 1.5px 0 1.8px;">General</span>
<span class="t" style="left:48.70px;top:455.31px;font-size:10.5px;color:#000;font-weight:normal;transform:scaleX(0.82);">Name</span>
<div style="left:92px;top:451px;width:145px;height:17px;border:1px solid #7F9DB9;background:#fff;box-sizing:border-box"></div>
<span class="t" style="left:95.40px;top:455.31px;font-size:10.5px;color:#000;font-weight:normal;transform:scaleX(0.82);">Mike Bourne</span>
<span class="t" style="left:48.70px;top:477.31px;font-size:10.5px;color:#0046D5;font-weight:normal;transform:scaleX(0.82);text-decoration:underline;">Type</span>
<div style="left:92px;top:474px;width:145px;height:18px;border:1px solid #7F9DB9;background:#fff;box-sizing:border-box"></div>
<span class="t" style="left:95.40px;top:477.51px;font-size:10.5px;color:#000;font-weight:normal;transform:scaleX(0.82);">Ex Husband</span>
<div style="left:222px;top:476px;width:13px;height:14px;border-radius:2px;background:linear-gradient(135deg,#D6E3FD 0%,#C1D3FB 50%,#B4C8F7 100%)"></div>
<svg style="position:absolute;left:222px;top:476px" width="13" height="14" viewBox="0 0 13 14"><path d="M3.2 5.0 L6.5 8.3 L9.8 5.0" fill="none" stroke="#4D6185" stroke-width="1.9"/></svg>
<span class="t" style="left:48.70px;top:502.31px;font-size:10.5px;color:#000;font-weight:normal;transform:scaleX(0.82);">Email</span>
<div style="left:92px;top:498px;width:145px;height:17px;border:1px solid #7F9DB9;background:#fff;box-sizing:border-box"></div>
<span class="t" style="left:95.40px;top:502.31px;font-size:10.5px;color:#000;font-weight:normal;transform:scaleX(0.82);">MikeB@cox.net</span>
<div style="left:258px;top:441px;width:133px;height:107px;border:1px solid #D0D0BF;border-radius:3px;box-sizing:border-box"></div>
<span class="t" style="left:264.98px;top:437.11px;font-size:10.5px;color:#0046D5;font-weight:normal;transform:scaleX(0.82);background:#DBFFFF;padding:0 1.5px 0 1.8px;">Phone Numbers</span>
<div style="left:262.8px;top:453.6px;width:11.5px;height:11.8px;border-radius:50%;border:1px solid #3A5F96;box-sizing:border-box;background:radial-gradient(circle at 40% 35%,#FFFFFF 0%,#F6F5F0 55%,#DEDCD3 100%)"></div>
<div style="left:266.4px;top:457.3px;width:4.4px;height:4.4px;border-radius:50%;background:radial-gradient(circle at 40% 40%,#40B840 0%,#21A121 60%,#168A16 100%)"></div>
<span class="t" style="left:279.10px;top:455.31px;font-size:10.5px;color:#000;font-weight:normal;transform:scaleX(0.82);">Home</span>
<div style="left:311px;top:451px;width:75px;height:17px;border:1px solid #7F9DB9;background:#fff;box-sizing:border-box"></div>
<span class="t" style="left:314.40px;top:455.31px;font-size:10.5px;color:#000;font-weight:normal;transform:scaleX(0.82);">602-555-7847</span>
<div style="left:262.8px;top:476.6px;width:11.5px;height:11.8px;border-radius:50%;border:1px solid #3A5F96;box-sizing:border-box;background:radial-gradient(circle at 40% 35%,#FFFFFF 0%,#F6F5F0 55%,#DEDCD3 100%)"></div>
<span class="t" style="left:279.10px;top:478.31px;font-size:10.5px;color:#000;font-weight:normal;transform:scaleX(0.82);">Cell</span>
<div style="left:311px;top:474px;width:75px;height:17px;border:1px solid #7F9DB9;background:#fff;box-sizing:border-box"></div>
<div style="left:262.8px;top:499.6px;width:11.5px;height:11.8px;border-radius:50%;border:1px solid #3A5F96;box-sizing:border-box;background:radial-gradient(circle at 40% 35%,#FFFFFF 0%,#F6F5F0 55%,#DEDCD3 100%)"></div>
<span class="t" style="left:279.10px;top:501.31px;font-size:10.5px;color:#000;font-weight:normal;transform:scaleX(0.82);">Work</span>
<div style="left:311px;top:498px;width:75px;height:17px;border:1px solid #7F9DB9;background:#fff;box-sizing:border-box"></div>
<span class="t" style="left:279.10px;top:525.31px;font-size:10.5px;color:#000;font-weight:normal;transform:scaleX(0.82);">FAX</span>
<div style="left:311px;top:521px;width:75px;height:17px;border:1px solid #7F9DB9;background:#fff;box-sizing:border-box"></div>
<div style="left:400px;top:441px;width:222px;height:107px;border:1px solid #D0D0BF;border-radius:3px;box-sizing:border-box"></div>
<span class="t" style="left:406.08px;top:437.11px;font-size:10.5px;color:#0046D5;font-weight:normal;transform:scaleX(0.82);background:#DBFFFF;padding:0 1.5px 0 1.8px;">Physical Address</span>
<span class="t" style="left:411.30px;top:455.31px;font-size:10.5px;color:#000;font-weight:normal;transform:scaleX(0.82);">Address</span>
<div style="left:454px;top:451px;width:155px;height:17px;border:1px solid #7F9DB9;background:#fff;box-sizing:border-box"></div>
<span class="t" style="left:457.40px;top:455.31px;font-size:10.5px;color:#000;font-weight:normal;transform:scaleX(0.82);">4141 N 67th Ave</span>
<span class="t" style="left:411.30px;top:478.31px;font-size:10.5px;color:#000;font-weight:normal;transform:scaleX(0.82);">Location</span>
<div style="left:454px;top:474px;width:155px;height:17px;border:1px solid #7F9DB9;background:#fff;box-sizing:border-box"></div>
<span class="t" style="left:457.40px;top:478.31px;font-size:10.5px;color:#000;font-weight:normal;transform:scaleX(0.82);">Phoenix, AZ</span>
<span class="t" style="left:411.30px;top:502.31px;font-size:10.5px;color:#000;font-weight:normal;transform:scaleX(0.82);">County</span>
<div style="left:454px;top:498px;width:155px;height:17px;border:1px solid #7F9DB9;background:#fff;box-sizing:border-box"></div>
<span class="t" style="left:457.40px;top:502.31px;font-size:10.5px;color:#000;font-weight:normal;transform:scaleX(0.82);">85029</span>
<div style="left:630px;top:440px;width:223px;height:108px;border:1px solid #D0D0BF;border-radius:3px;box-sizing:border-box"></div>
<span class="t" style="left:636.78px;top:436.11px;font-size:10.5px;color:#0046D5;font-weight:normal;transform:scaleX(0.82);background:#DBFFFF;padding:0 1.5px 0 1.8px;">Mailing Address</span>
<span class="t" style="left:641.40px;top:455.31px;font-size:10.5px;color:#000;font-weight:normal;transform:scaleX(0.82);">Address</span>
<div style="left:686px;top:451px;width:155px;height:17px;border:1px solid #7F9DB9;background:#fff;box-sizing:border-box"></div>
<span class="t" style="left:641.40px;top:478.31px;font-size:10.5px;color:#000;font-weight:normal;transform:scaleX(0.82);">Location</span>
<div style="left:686px;top:474px;width:155px;height:17px;border:1px solid #7F9DB9;background:#fff;box-sizing:border-box"></div>
<div style="left:686px;top:500px;width:11px;height:12px;border:1px solid #2D5A93;box-sizing:border-box;background:linear-gradient(135deg,#DCDCD7 0%,#F4F4F0 60%,#FFFFFF 100%)"></div>
<span class="t" style="left:702.20px;top:500.61px;font-size:10.5px;color:#000;font-weight:normal;transform:scaleX(0.82);">Same as physical address</span>
<div style="left:36px;top:558px;width:816px;height:37px;border:1px solid #7F9DB9;background:#fff;box-sizing:border-box"></div>
<div style="left:3px;top:615px;width:879px;height:1px;background:#A9B6C3"></div>
<span class="t" style="left:13.00px;top:618.11px;font-size:10.5px;color:#000;font-weight:normal;transform:scaleX(0.82);">Danny Snide, Karen Snide VS Tamera Bourne, Jill Jackson</span>
<span class="t" style="left:287.00px;top:618.11px;font-size:10.5px;color:#000;font-weight:normal;transform:scaleX(0.82);">AZ  $1,029.28</span>
</body></html>
